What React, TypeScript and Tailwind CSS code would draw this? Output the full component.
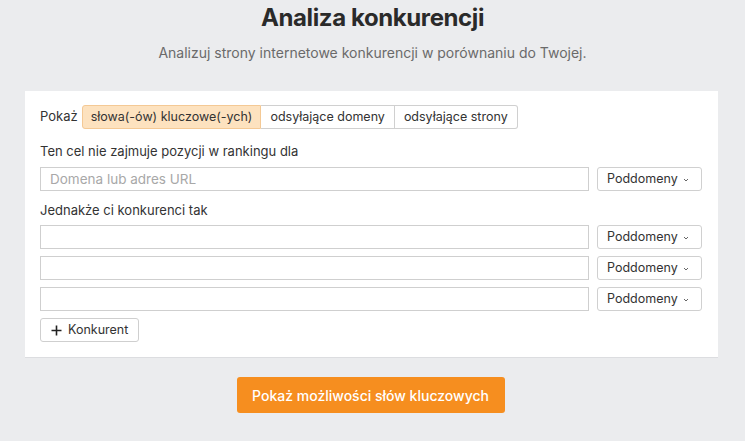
import React from 'react';

const font = { fontFamily: 'Inter, "Noto Sans", sans-serif' };

const Chevron = () => (
    <svg width="8" height="8" viewBox="0 0 8 8" className="mt-[1px]">
        <path d="M2 3 L4 5 L6 3" fill="none" stroke="#666" strokeWidth="1" />
    </svg>
);

const SubdomainSelect = () => (
    <button className="flex items-center justify-between h-[24px] w-[105px] shrink-0 pl-[9px] pr-[11px] rounded-[3px] border border-[#d0d0d0] bg-white text-[12.5px] text-[#333]">
        Poddomeny
        <Chevron />
    </button>
);

const UrlRow = ({ placeholder }: { placeholder?: string }) => (
    <div className="flex gap-[8px]">
        <input
            className="h-[24px] flex-1 border border-[#cfcfcf] px-[9px] text-[13.5px] text-[#333] placeholder:text-[#a8a8a8] outline-none"
            placeholder={placeholder}
        />
        <SubdomainSelect />
    </div>
);

export default function App() {
    const tabs = ['słowa(-ów) kluczowe(-ych)', 'odsyłające domeny', 'odsyłające strony'];
    return (
        <div className="min-h-[441px] bg-[#ebecee] pt-[3px]" style={font}>
            <h1 className="text-center text-[24px] font-bold leading-[29px] text-[#2a2a2a] tracking-[-0.4px]">Analiza konkurencji</h1>
            <p className="mt-[12px] text-center text-[14px] leading-[17px] text-[#6a6a6a]">
                Analizuj strony internetowe konkurencji w porównaniu do Twojej.
            </p>

            <div className="ml-[25px] mt-[30px] w-[693px] bg-white border-b border-[#dcdde0] pl-[15px] pr-[16px] pt-[14px] pb-[15px]">
                <div className="flex items-center">
                    <span className="text-[13px] text-[#333] mr-[4px]">Pokaż</span>
                    <div className="flex">
                        {tabs.map((t, i) => (
                            <div
                                key={t}
                                className={
                                    i === 0
                                        ? 'h-[24px] px-[8px] flex items-center text-[12.5px] text-[#333] bg-[#fde2bf] border border-[#f4c995] rounded-l-[3px]'
                                        : i === 1
                                        ? 'h-[24px] px-[9px] flex items-center text-[12.5px] text-[#333] bg-white border border-l-0 border-[#d0d0d0]'
                                        : 'h-[24px] px-[9px] flex items-center text-[12.5px] text-[#333] bg-white border border-l-0 border-[#d0d0d0] rounded-r-[3px]'
                                }
                            >
                                {t}
                            </div>
                        ))}
                    </div>
                </div>

                <div className="mt-[14px] text-[13px] leading-[16px] text-[#333]">Ten cel nie zajmuje pozycji w rankingu dla</div>
                <div className="mt-[8px]">
                    <UrlRow placeholder="Domena lub adres URL" />
                </div>

                <div className="mt-[11px] text-[13px] leading-[16px] text-[#333]">Jednakże ci konkurenci tak</div>
                <div className="mt-[7px] flex flex-col gap-[7px]">
                    <UrlRow />
                    <UrlRow />
                    <UrlRow />
                </div>

                <button className="mt-[7px] h-[24px] flex items-center gap-[6px] px-[10px] rounded-[3px] border border-[#cfcfcf] bg-white text-[12.5px] text-[#333]">
                    <svg width="11" height="11" viewBox="0 0 11 11">
                        <path d="M5.5 0.5 V10.5 M0.5 5.5 H10.5" stroke="#222" strokeWidth="1.6" />
                    </svg>
                    Konkurent
                </button>
            </div>

            <div className="flex justify-center mt-[19px] pr-[4px]">
                <button className="h-[36px] w-[268px] rounded-[3px] bg-[#f68e1f] text-white text-[14px] font-medium">
                    Pokaż możliwości słów kluczowych
                </button>
            </div>
        </div>
    );
}
